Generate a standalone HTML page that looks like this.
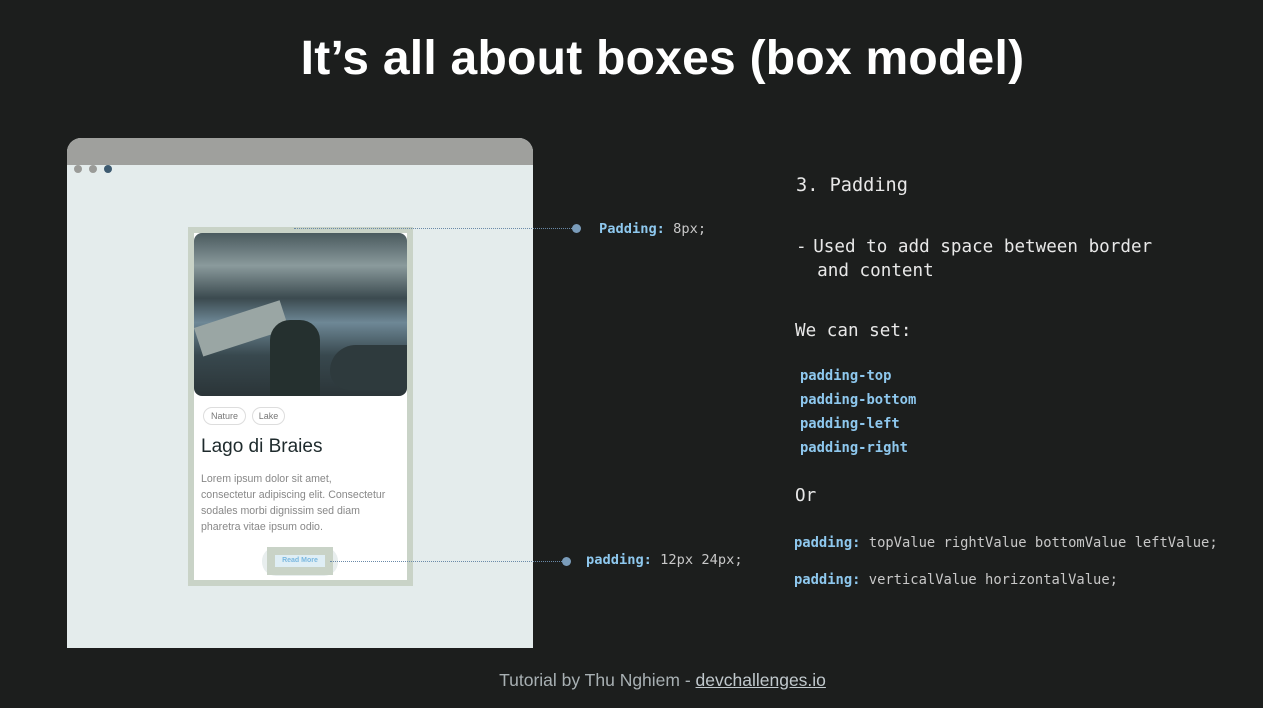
<!DOCTYPE html>
<html><head><meta charset="utf-8"><style>
*{margin:0;padding:0;box-sizing:border-box}
body{width:1263px;height:708px;background:#1c1e1d;position:relative;overflow:hidden;font-family:"Liberation Sans",sans-serif}
.abs{position:absolute}
.mono{font-family:"DejaVu Sans Mono","Liberation Mono",monospace;white-space:pre}
.t{color:#e8e8e8}
.k{color:#8ec8ee;font-weight:bold}
.v{color:#c8c8c8}
</style></head><body>
<div class="abs" style="left:0;width:1325px;top:31px;text-align:center;color:#fff;font-size:48px;font-weight:bold;letter-spacing:0.25px">It’s all about boxes (box model)</div>

<div class="abs" style="left:67px;top:138px;width:466px;height:510px;background:#e4ecec;border-radius:14px 14px 0 0;overflow:hidden">
 <div style="height:27px;background:#9fa09d"></div>
 <div class="abs" style="left:7px;top:27px;width:8px;height:8px;border-radius:50%;background:#9a9b98"></div>
 <div class="abs" style="left:22px;top:27px;width:8px;height:8px;border-radius:50%;background:#9a9b98"></div>
 <div class="abs" style="left:37px;top:27px;width:8px;height:8px;border-radius:50%;background:#3d5a70"></div>
</div>

<div class="abs" style="left:188px;top:227px;width:225px;height:359px;background:#c9d3c7"></div>
<div class="abs" style="left:194px;top:233px;width:213px;height:347px;background:#fff"></div>
<div class="abs" style="left:194px;top:233px;width:213px;height:163px;border-radius:8px;overflow:hidden;background:linear-gradient(180deg,#4a5a5e 0%,#8a9a9c 20%,#3b4a4f 40%,#6e8896 55%,#38484e 75%,#2b3538 100%)">
 <div class="abs" style="left:0;width:90px;height:30px;background:#9aa6a4;transform:rotate(-18deg);transform-origin:0 0;top:95px"></div>
 <div class="abs" style="left:76px;top:87px;width:50px;height:76px;background:#25302f;border-radius:20px 20px 0 0"></div>
 <div class="abs" style="left:136px;top:112px;width:77px;height:45px;background:#2e3a3d;border-radius:40px 0 8px 30px"></div>
</div>
<div class="abs" style="left:203px;top:407px;width:43px;height:18px;border:1px solid #ddd;border-radius:9px;font-size:9px;color:#777;text-align:center;line-height:16px">Nature</div>
<div class="abs" style="left:252px;top:407px;width:33px;height:18px;border:1px solid #ddd;border-radius:9px;font-size:9px;color:#777;text-align:center;line-height:16px">Lake</div>
<div class="abs" style="left:201px;top:436px;font-size:19px;color:#1e2a2c">Lago di Braies</div>
<div class="abs" style="left:201px;top:471px;width:215px;font-size:10.6px;line-height:16px;color:#888;white-space:nowrap">Lorem ipsum dolor sit amet,<br>consectetur adipiscing elit. Consectetur<br>sodales morbi dignissim sed diam<br>pharetra vitae ipsum odio.</div>
<div class="abs" style="left:262px;top:547px;width:76px;height:29px;border-radius:14px;background:#e8eeee"></div>
<div class="abs" style="left:267px;top:547px;width:66px;height:28px;background:#c9d3c7"></div>
<div class="abs" style="left:275px;top:555px;width:50px;height:12px;background:#dfeef5;font-size:7px;color:#7ab8e0;text-align:center;line-height:12px;font-weight:bold">Read More</div>

<div class="abs" style="left:294px;top:228px;width:282px;border-top:1px dotted #6a8aa8"></div>
<div class="abs" style="left:572px;top:224px;width:9px;height:9px;border-radius:50%;background:#7a9cba"></div>
<div class="abs" style="left:330px;top:561px;width:236px;border-top:1px dotted #6a8aa8"></div>
<div class="abs" style="left:562px;top:557px;width:9px;height:9px;border-radius:50%;background:#7a9cba"></div>

<div class="abs mono" style="left:599px;top:221px;font-size:13.7px"><span class="k">Padding:</span><span class="v"> 8px;</span></div>
<div class="abs mono" style="left:586px;top:552px;font-size:13.7px"><span class="k">padding:</span><span class="v"> 12px 24px;</span></div>

<div class="abs mono t" style="left:796px;top:175px;font-size:18.6px">3. Padding</div>
<div class="abs mono t" style="left:796px;top:235px;font-size:17.6px;line-height:24px">-<span style="letter-spacing:-4px"> </span>Used to add space between border
  and content</div>
<div class="abs mono t" style="left:795px;top:321px;font-size:17.6px">We can set:</div>
<div class="abs mono" style="left:800px;top:364px;font-size:13.8px;line-height:24px;color:#8ec8ee;font-weight:bold">padding-top
padding-bottom
padding-left
padding-right</div>
<div class="abs mono t" style="left:795px;top:486px;font-size:17.6px">Or</div>
<div class="abs mono" style="left:794px;top:535px;font-size:13.8px"><span class="k">padding:</span><span class="v"> topValue rightValue bottomValue leftValue;</span></div>
<div class="abs mono" style="left:794px;top:572px;font-size:13.8px"><span class="k">padding:</span><span class="v"> verticalValue horizontalValue;</span></div>

<div class="abs" style="left:0;width:1325px;top:670px;text-align:center;font-size:17.5px;color:#a8b0b3">Tutorial by Thu Nghiem - <span style="text-decoration:underline;color:#c0c8cc">devchallenges.io</span></div>
</body></html>
